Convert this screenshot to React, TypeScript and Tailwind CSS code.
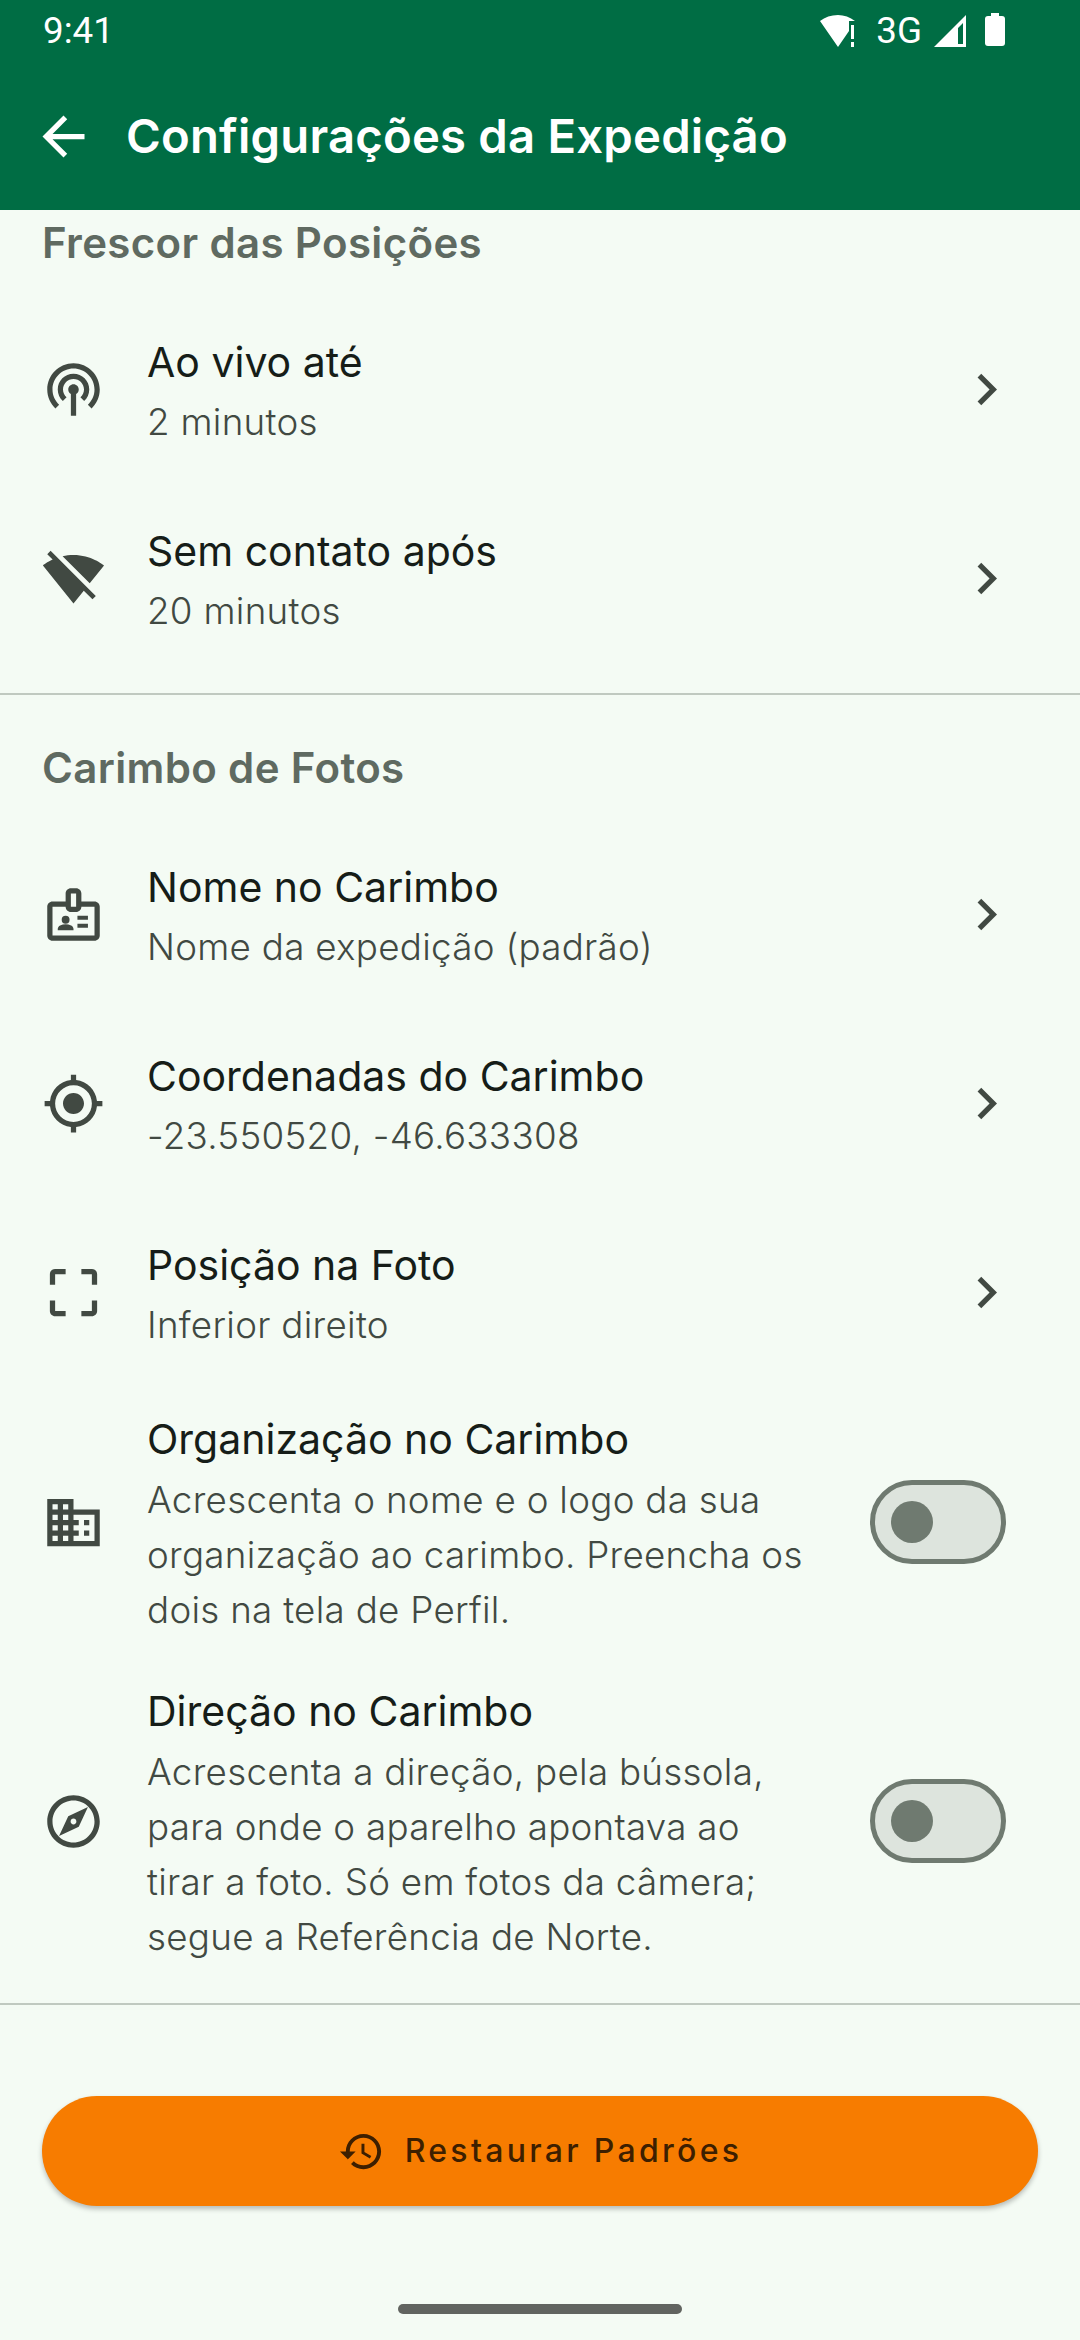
const ICONS = {
  podcast: "M14,12c0,0.74-0.4,1.38-1,1.72V22h-2v-8.28c-0.6-0.35-1-0.98-1-1.72c0-1.1,0.9-2,2-2S14,10.9,14,12z M12,6c-3.31,0-6,2.69-6,6 c0,1.74,0.75,3.31,1.94,4.4l1.42-1.42C8.53,14.25,8,13.19,8,12c0-2.21,1.79-4,4-4s4,1.79,4,4c0,1.19-0.53,2.25-1.36,2.98 l1.42,1.42C17.25,15.31,18,13.74,18,12C18,8.69,15.31,6,12,6z M12,2C6.48,2,2,6.48,2,12c0,2.85,1.2,5.41,3.11,7.24l1.42-1.42 C4.98,16.36,4,14.29,4,12c0-4.41,3.59-8,8-8s8,3.59,8,8c0,2.29-0.98,4.36-2.53,5.82l1.42,1.42C20.8,17.41,22,14.85,22,12 C22,6.48,17.52,2,12,2z",
  wifiOff: "M23.64 7c-.45-.34-4.93-4-11.64-4-1.5 0-2.89.19-4.15.48L18.18 13.8 23.64 7zm-6.6 8.22L3.27 1.44 2 2.72l2.05 2.06C1.91 5.76.59 6.82.36 7l11.63 14.49.01.01.01-.01 3.9-4.86 3.32 3.32 1.27-1.27-3.46-3.46z",
  badge: "M20,7h-5V4c0-1.1-0.9-2-2-2h-2C9.9,2,9,2.9,9,4v3H4C2.9,7,2,7.9,2,9v11c0,1.1,0.9,2,2,2h16c1.1,0,2-0.9,2-2V9C22,7.9,21.1,7,20,7z M11,4h2v5h-2V4z M20,20H4V9h5c0,1.1,0.9,2,2,2h2c1.1,0,2-0.9,2-2h5V20z M9,12.5a1.5,1.5 0 1,0 0,3a1.5,1.5 0 1,0 0,-3z M11.08,16.18C10.44,15.9,9.74,15.75,9,15.75s-1.44,0.15-2.08,0.43C6.36,16.42,6,16.96,6,17.57V18h6v-0.43C12,16.96,11.64,16.42,11.08,16.18z M13.5,12.5h4V14h-4z M13.5,15.5h4V17h-4z",
  gps: "M12 8c-2.21 0-4 1.79-4 4s1.79 4 4 4 4-1.79 4-4-1.79-4-4-4zm8.94 3c-.46-4.17-3.77-7.48-7.94-7.94V1h-2v2.06C6.83 3.52 3.52 6.83 3.06 11H1v2h2.06c.46 4.17 3.77 7.48 7.94 7.94V23h2v-2.06c4.17-.46 7.48-3.77 7.94-7.94H23v-2h-2.06zM12 19c-3.87 0-7-3.13-7-7s3.13-7 7-7 7 3.13 7 7-3.13 7-7 7z",
  crop: "M5 15H3v4c0 1.1.9 2 2 2h4v-2H5v-4zM5 5h4V3H5c-1.1 0-2 .9-2 2v4h2V5zm14-2h-4v2h4v4h2V5c0-1.1-.9-2-2-2zm0 16h-4v2h4c1.1 0 2-.9 2-2v-4h-2v4z",
  domain: "M12 7V3H2v18h20V7H12zM6 19H4v-2h2v2zm0-4H4v-2h2v2zm0-4H4V9h2v2zm0-4H4V5h2v2zm4 12H8v-2h2v2zm0-4H8v-2h2v2zm0-4H8V9h2v2zm0-4H8V5h2v2zm10 12h-8v-2h2v-2h-2v-2h2v-2h-2V9h8v10zm-2-8h-2v2h2v-2zm0 4h-2v2h2v-2z",
  explore: "M12 2C6.48 2 2 6.48 2 12s4.48 10 10 10 10-4.48 10-10S17.52 2 12 2zm0 18c-4.41 0-8-3.59-8-8s3.59-8 8-8 8 3.59 8 8-3.59 8-8 8zm-5.5-2.5l7.51-3.49L17.5 6.5 9.99 9.99 6.5 17.5zm5.5-6.6c.61 0 1.1.49 1.1 1.1s-.49 1.1-1.1 1.1-1.1-.49-1.1-1.1.49-1.1 1.1-1.1z",
  history: "M13 3c-4.97 0-9 4.03-9 9H1l3.89 3.89.07.14L9 12H6c0-3.87 3.13-7 7-7s7 3.13 7 7-3.13 7-7 7c-1.93 0-3.68-.79-4.94-2.06l-1.42 1.42C8.27 19.99 10.51 21 13 21c4.97 0 9-4.03 9-9s-4.03-9-9-9zm-1 5v5l4.28 2.54.72-1.21-3.5-2.08V8H12z",
  back: "M20 11H7.83l5.59-5.59L12 4l-8 8 8 8 1.41-1.41L7.83 13H20v-2z",
  chevron: "M10 6L8.59 7.41 13.17 12l-4.58 4.59L10 18l6-6z",
};

function Icon({ d, className }: { d: string; className: string }) {
  return (
    <svg viewBox="0 0 24 24" className={className} fill="currentColor">
      <path d={d} />
    </svg>
  );
}

function SectionTitle({ children, className }: { children: string; className: string }) {
  return <div className={"px-[42px] text-[42px] leading-[52px] font-semibold tracking-[0.35px] text-[#5f6a61] " + className}>{children}</div>;
}

function NavRow({ icon, title, value }: { icon: string; title: string; value: string }) {
  return (
    <div className="flex h-[189px] items-center pl-[42px] pr-[42px]">
      <Icon d={icon} className="h-[63px] w-[63px] shrink-0 text-[#414942]" />
      <div className="ml-[42px] flex-1">
        <div className="pt-[2px] text-[41px] leading-[62px] text-[#161d18]">{title}</div>
        <div className="text-[36.75px] leading-[58px] font-light tracking-[0.28px] text-[#414942]">{value}</div>
      </div>
      <Icon d={ICONS.chevron} className="mr-[20px] h-[63px] w-[63px] shrink-0 text-[#414942]" />
    </div>
  );
}

function ToggleRow({ icon, title, lines, className }: { icon: string; title: string; lines: string[]; className: string }) {
  return (
    <div className={"flex items-center pl-[42px] pr-[74px] " + className}>
      <Icon d={icon} className="h-[63px] w-[63px] shrink-0 text-[#414942]" />
      <div className="ml-[42px] flex-1">
        <div className="text-[41px] leading-[65px] text-[#161d18]">{title}</div>
        {lines.map((line) => (
          <div key={line} className="whitespace-nowrap text-[36.75px] leading-[55px] font-light tracking-[0.28px] text-[#414942]">{line}</div>
        ))}
      </div>
      <div className="flex h-[84px] w-[136px] shrink-0 items-center rounded-full border-[5px] border-[#6f7a70] bg-[#dde4dd] pl-[16px]">
        <div className="h-[42px] w-[42px] rounded-full bg-[#6f7a70]" />
      </div>
    </div>
  );
}

export default function App() {
  return (
    <div className="flex h-[2340px] w-[1080px] flex-col overflow-hidden bg-[#f4fbf4] font-['Inter',sans-serif]">
      <header className="h-[210px] shrink-0 bg-[#006d44] text-white">
        <div className="flex h-[62px] items-center justify-between pl-[43px] pr-[75px]">
          <span className="font-['Roboto',sans-serif] text-[36.75px] leading-none">9:41</span>
          <div className="flex items-center">
            <svg viewBox="0 0 36 32" className="h-[32px] w-[36px]" fill="currentColor">
              <path d="M18 0C11 0 5 2 0 6l18 26 11-16V6h6C30 2 24 0 18 0z" />
              <path d="M31 10h3v14h-3zM31 27h3v5h-3z" />
            </svg>
            <span className="ml-[20px] font-['Roboto',sans-serif] text-[36.75px] leading-none">3G</span>
            <svg viewBox="0 0 32 32" className="ml-[12px] h-[32px] w-[32px]" fill="currentColor">
              <path fillRule="evenodd" d="M32 0v32H0zM29 8L24 13v16h5z" />
            </svg>
            <div className="relative ml-[19px] h-[30px] w-[20px] rounded-[3px] bg-white">
              <div className="absolute left-[6px] top-[-3px] h-[3px] w-[8px] bg-white" />
            </div>
          </div>
        </div>
        <div className="flex h-[148px] items-center pl-[32px]">
          <Icon d={ICONS.back} className="h-[63px] w-[63px]" />
          <h1 className="ml-[31px] text-[47.25px] font-semibold leading-none tracking-[0.2px]">Configurações da Expedição</h1>
        </div>
      </header>

      <SectionTitle className="mt-[7px] mb-[26px]">Frescor das Posições</SectionTitle>
      <NavRow icon={ICONS.podcast} title="Ao vivo até" value="2 minutos" />
      <NavRow icon={ICONS.wifiOff} title="Sem contato após" value="20 minutos" />
      <div className="mt-[20px] h-[2px] bg-[#c0c9c0]" />

      <SectionTitle className="mt-[47px] mb-[26px]">Carimbo de Fotos</SectionTitle>
      <NavRow icon={ICONS.badge} title="Nome no Carimbo" value="Nome da expedição (padrão)" />
      <NavRow icon={ICONS.gps} title="Coordenadas do Carimbo" value="-23.550520, -46.633308" />
      <NavRow icon={ICONS.crop} title="Posição na Foto" value="Inferior direito" />
      <ToggleRow
        className="mt-[13px] h-[244px]"
        icon={ICONS.domain}
        title="Organização no Carimbo"
        lines={["Acrescenta o nome e o logo da sua", "organização ao carimbo. Preencha os", "dois na tela de Perfil."]}
      />
      <ToggleRow
        className="mt-[28px] h-[298px]"
        icon={ICONS.explore}
        title="Direção no Carimbo"
        lines={["Acrescenta a direção, pela bússola,", "para onde o aparelho apontava ao", "tirar a foto. Só em fotos da câmera;", "segue a Referência de Norte."]}
      />
      <div className="mt-[33px] h-[2px] bg-[#c0c9c0]" />

      <div className="mt-[91px] px-[42px]">
        <button className="flex h-[110px] w-full items-center justify-center rounded-full bg-[#f77c00] text-[#3d1f00] shadow-[0_3px_5px_rgba(0,0,0,0.25)]">
          <Icon d={ICONS.history} className="h-[47px] w-[47px]" />
          <span className="ml-[20px] text-[32px] font-medium tracking-[3.3px]">Restaurar Padrões</span>
        </button>
      </div>

      <div className="mt-[98px] flex justify-center">
        <div className="h-[10px] w-[284px] rounded-full bg-[#616460]" />
      </div>
    </div>
  );
}
